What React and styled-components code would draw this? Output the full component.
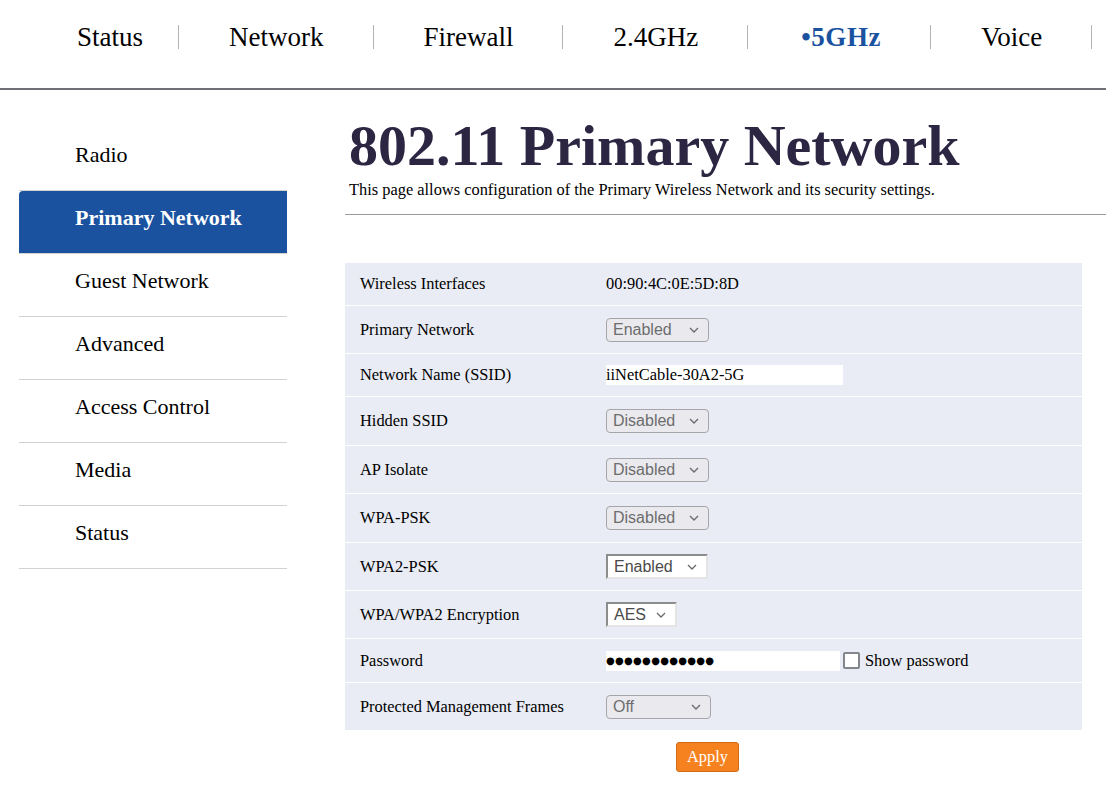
import React from "react";
import styled, { createGlobalStyle } from "styled-components";

const GlobalStyle = createGlobalStyle`
  body {
    margin: 0;
    background: #ffffff;
    font-family: "Liberation Serif", "Times New Roman", serif;
    color: #000;
  }
`;

const Header = styled.div`
  height: 88px;
  border-bottom: 2px solid #6f6f78;
`;

const Nav = styled.ul`
  display: flex;
  list-style: none;
  margin: 0;
  padding: 25px 0 0 27px;
`;

const NavItem = styled.li`
  height: 24px;
  line-height: 24px;
  padding: 0 ${(p) => (p.$first ? 35 : 49)}px 0 ${(p) => (p.$active ? 53 : 50)}px;
  border-right: 1px solid #b4b4b4;
  font-size: 27px;
  font-weight: ${(p) => (p.$active ? "bold" : "normal")};
  letter-spacing: ${(p) => (p.$active ? "0.6px" : "0")};
  color: ${(p) => (p.$active ? "#1a52a0" : "#000")};
  white-space: nowrap;
`;

const Body = styled.div`
  display: flex;
  align-items: flex-start;
`;

const Sidebar = styled.ul`
  list-style: none;
  width: 268px;
  margin: 38px 0 0 19px;
  padding: 0;
  flex-shrink: 0;
`;

const SideItem = styled.li`
  height: 62px;
  line-height: 54px;
  padding-left: 56px;
  border-bottom: 1px solid #d2d2d2;
  font-size: 22px;
  font-weight: ${(p) => (p.$active ? "bold" : "normal")};
  color: ${(p) => (p.$active ? "#fff" : "#000")};
  background: ${(p) => (p.$active ? "#1a52a0" : "transparent")};
  border-top-left-radius: ${(p) => (p.$active ? "4px" : "0")};
  white-space: nowrap;
`;

const Main = styled.div`
  flex: 1;
  margin-left: 58px;
  padding-top: 23px;
`;

const Title = styled.h1`
  margin: 0 0 0 4px;
  font-size: 58px;
  line-height: 66px;
  font-weight: bold;
  color: #2d2643;
  white-space: nowrap;
`;

const Subtitle = styled.p`
  margin: 2px 0 0 4px;
  font-size: 16.4px;
  line-height: 18px;
`;

const Rule = styled.div`
  height: 1px;
  background: #9a9a9a;
  margin-top: 15px;
`;

const Table = styled.div`
  display: flex;
  flex-direction: column;
  gap: 1px;
  margin: 48px 24px 0 0;
`;

const Row = styled.div`
  display: grid;
  grid-template-columns: 261px 1fr;
  align-items: center;
  height: ${(p) => p.$h}px;
  background: #e9ecf4;
  font-size: 16.4px;
`;

const Label = styled.div`
  padding-left: 15px;
`;

const Value = styled.div`
  display: flex;
  align-items: center;
`;

const Select = styled.div`
  box-sizing: border-box;
  display: inline-flex;
  align-items: center;
  justify-content: space-between;
  width: ${(p) => p.$w}px;
  height: ${(p) => (p.$disabled ? 24 : 25)}px;
  padding: 0 9px 0 6px;
  font-family: "Liberation Sans", Arial, sans-serif;
  font-size: 16px;
  color: ${(p) => (p.$disabled ? "#6d6d6d" : "#4a4a4a")};
  background: ${(p) => (p.$disabled ? "#eaeaee" : "#fff")};
  border: ${(p) => (p.$disabled ? "1px solid #a6a6aa" : "2px solid")};
  border-color: ${(p) =>
    p.$disabled ? "#a6a6aa" : "#8c8c8c #e4e4e4 #e4e4e4 #8c8c8c"};
  border-radius: ${(p) => (p.$disabled ? "4px" : "0")};
`;

const TextInput = styled.input`
  box-sizing: border-box;
  width: ${(p) => p.$w}px;
  height: 20px;
  padding: 0;
  border: none;
  outline: none;
  background: #fff;
  font-family: "Liberation Serif", serif;
  font-size: 16.4px;
  color: #000;
`;

const Dots = styled.span`
  box-sizing: border-box;
  display: inline-block;
  width: 234px;
  height: 20px;
  line-height: 20px;
  background: #fff;
  font-family: "DejaVu Sans", sans-serif;
  font-size: 10px;
  letter-spacing: 0.3px;
  color: #000;
  overflow: hidden;
`;

const Checkbox = styled.span`
  box-sizing: border-box;
  display: inline-block;
  width: 17px;
  height: 17px;
  margin-left: 3px;
  border: 2px solid #85858d;
  border-radius: 2px;
  background: #fff;
`;

const CheckLabel = styled.span`
  margin-left: 5px;
  font-size: 16.4px;
`;

const Actions = styled.div`
  padding: 12px 0 0 331px;
`;

const ApplyButton = styled.button`
  width: 63px;
  height: 30px;
  padding: 0;
  background: #f5821f;
  border: 1px solid #cf6c18;
  border-radius: 3px;
  color: #fff;
  font-family: "Liberation Serif", serif;
  font-size: 16.4px;
`;

const Chevron = () => (
  <svg width="10" height="6" viewBox="0 0 10 6">
    <polyline
      points="1,1 5,5 9,1"
      fill="none"
      stroke="#6a6a6a"
      strokeWidth="1.3"
    />
  </svg>
);

const Dropdown = ({ value, width, disabled }) => (
  <Select $w={width} $disabled={disabled}>
    <span>{value}</span>
    <Chevron />
  </Select>
);

const navItems = ["Status", "Network", "Firewall", "2.4GHz", "5GHz", "Voice"];
const sideItems = [
  "Radio",
  "Primary Network",
  "Guest Network",
  "Advanced",
  "Access Control",
  "Media",
  "Status",
];

export default function App() {
  return (
    <>
      <GlobalStyle />
      <Header>
        <Nav>
          {navItems.map((n, i) => (
            <NavItem key={n} $first={i === 0} $active={n === "5GHz"}>
              {n === "5GHz" ? "•5GHz" : n}
            </NavItem>
          ))}
        </Nav>
      </Header>
      <Body>
        <Sidebar>
          {sideItems.map((s, i) => (
            <SideItem key={i} $active={s === "Primary Network"}>
              {s}
            </SideItem>
          ))}
        </Sidebar>
        <Main>
          <Title>802.11 Primary Network</Title>
          <Subtitle>
            This page allows configuration of the Primary Wireless Network and
            its security settings.
          </Subtitle>
          <Rule />
          <Table>
            <Row $h={42}>
              <Label>Wireless Interfaces</Label>
              <Value>00:90:4C:0E:5D:8D</Value>
            </Row>
            <Row $h={47}>
              <Label>Primary Network</Label>
              <Value>
                <Dropdown value="Enabled" width={103} disabled />
              </Value>
            </Row>
            <Row $h={42}>
              <Label>Network Name (SSID)</Label>
              <Value>
                <TextInput $w={237} readOnly defaultValue="iiNetCable-30A2-5G" />
              </Value>
            </Row>
            <Row $h={48}>
              <Label>Hidden SSID</Label>
              <Value>
                <Dropdown value="Disabled" width={103} disabled />
              </Value>
            </Row>
            <Row $h={47}>
              <Label>AP Isolate</Label>
              <Value>
                <Dropdown value="Disabled" width={103} disabled />
              </Value>
            </Row>
            <Row $h={48}>
              <Label>WPA-PSK</Label>
              <Value>
                <Dropdown value="Disabled" width={103} disabled />
              </Value>
            </Row>
            <Row $h={47}>
              <Label>WPA2-PSK</Label>
              <Value>
                <Dropdown value="Enabled" width={102} />
              </Value>
            </Row>
            <Row $h={47}>
              <Label>WPA/WPA2 Encryption</Label>
              <Value>
                <Dropdown value="AES" width={71} />
              </Value>
            </Row>
            <Row $h={43}>
              <Label>Password</Label>
              <Value>
                <Dots>●●●●●●●●●●●●</Dots>
                <Checkbox />
                <CheckLabel>Show password</CheckLabel>
              </Value>
            </Row>
            <Row $h={47}>
              <Label>Protected Management Frames</Label>
              <Value>
                <Dropdown value="Off" width={105} disabled />
              </Value>
            </Row>
          </Table>
          <Actions>
            <ApplyButton>Apply</ApplyButton>
          </Actions>
        </Main>
      </Body>
    </>
  );
}
